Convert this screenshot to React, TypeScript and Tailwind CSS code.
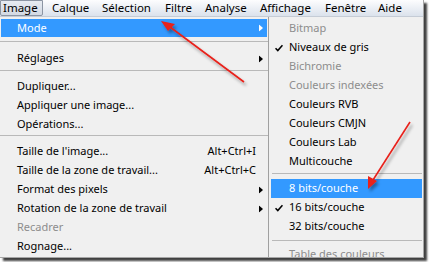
import React from "react";

type RowProps = {
  label: string;
  h: string;
  disabled?: boolean;
  hl?: boolean;
  arrow?: boolean;
  shortcut?: string;
  check?: boolean;
  sub?: boolean;
};

function Check({ white }: { white?: boolean }) {
  return (
    <svg width="8" height="8" viewBox="0 0 8 8" className="absolute left-[4px] top-1/2 -translate-y-1/2">
      <path d="M0.5 4.2 L2.8 6.5 L7.5 1.2" fill="none" stroke={white ? "#fff" : "#000"} strokeWidth="1.6" />
    </svg>
  );
}

function Row({ label, h, disabled, hl, arrow, shortcut, check, sub }: RowProps) {
  const base = sub
    ? "relative flex items-center ml-[2px] mr-[1px] pl-[18px]"
    : "relative flex items-center mx-[1px] pl-[16px]";
  const color = hl ? "bg-[#3399ff] text-white" : disabled ? "text-[#8d8d8d]" : "text-[#000000]";
  return (
    <div className={`${base} ${h} ${color}`}>
      {check && <Check white={hl} />}
      <span className="whitespace-nowrap">{label}</span>
      {shortcut && (
        <span className="absolute right-[11px] top-0 h-full flex items-center whitespace-nowrap">{shortcut}</span>
      )}
      {arrow && (
        <svg width="4" height="7" viewBox="0 0 4 7" className="absolute right-[4px] top-1/2 -translate-y-1/2">
          <path d="M0 0 L4 3.5 L0 7 Z" fill={hl ? "#fff" : "#000"} />
        </svg>
      )}
    </div>
  );
}

function Sep({ h, pt, sub }: { h: string; pt: string; sub?: boolean }) {
  return (
    <div className={`${h} ${pt} ${sub ? "pl-[3px] pr-[1px]" : ""}`}>
      <div className="h-[1px] bg-[#b9b9b9]" />
    </div>
  );
}

export default function App() {
  return (
    <div className="relative w-[429px] h-[262px] bg-white overflow-hidden font-['Noto_Sans',sans-serif] text-[11px]">
      <div className="w-[424px] h-[258px] bg-[#f0f0f0] shadow-[3px_3px_2px_rgba(0,0,0,0.75)] border-r border-b border-[#a6a6a6] overflow-hidden flex flex-col">
        {/* menu bar */}
        <div className="relative flex h-[17px] shrink-0 bg-gradient-to-b from-[#fdfdfe] to-[#dbe2ec] border-b border-[#c5ccd6] text-[11.5px] text-black leading-[16px]">
          <div className="absolute left-0 top-0 w-[43px] h-[16px] rounded-b-[2px] border border-[#8c95a3] bg-gradient-to-b from-[#e7ebf1] to-[#d3d9e3]" />
          <div className="relative w-[49px] pl-[3px]">Image</div>
          <div className="relative w-[50px] pl-[3px]">Calque</div>
          <div className="relative w-[63px] pl-[3px]">Sélection</div>
          <div className="relative w-[40px] pl-[3px]">Filtre</div>
          <div className="relative w-[55px] pl-[3px]">Analyse</div>
          <div className="relative w-[65px] pl-[3px]">Affichage</div>
          <div className="relative w-[53px] pl-[3px]">Fenêtre</div>
          <div className="relative pl-[3px]">Aide</div>
        </div>

        {/* body */}
        <div className="flex flex-1 min-h-0">
          <div className="w-[268px] pt-[2px] shrink-0">
            <Row label="Mode" h="h-[18px]" hl arrow />
            <Sep h="h-[12px]" pt="pt-[4px]" />
            <Row label="Réglages" h="h-[19px]" arrow />
            <Sep h="h-[9px]" pt="pt-[2px]" />
            <Row label="Dupliquer..." h="h-[19px]" />
            <Row label="Appliquer une image..." h="h-[19px]" />
            <Row label="Opérations..." h="h-[19px]" />
            <Sep h="h-[8px]" pt="pt-[1px]" />
            <Row label="Taille de l'image..." h="h-[19px]" shortcut="Alt+Ctrl+I" />
            <Row label="Taille de la zone de travail..." h="h-[19px]" shortcut="Alt+Ctrl+C" />
            <Row label="Format des pixels" h="h-[19px]" arrow />
            <Row label="Rotation de la zone de travail" h="h-[19px]" arrow />
            <Row label="Recadrer" h="h-[19px]" disabled />
            <Row label="Rognage..." h="h-[19px]" />
          </div>
          <div className="w-[1px] bg-[#a0a0a0] shrink-0" />
          <div className="flex-1 pt-[2px]">
            <Row sub label="Bitmap" h="h-[19px]" disabled />
            <Row sub label="Niveaux de gris" h="h-[19px]" check />
            <Row sub label="Bichromie" h="h-[19px]" disabled />
            <Row sub label="Couleurs indexées" h="h-[19px]" disabled />
            <Row sub label="Couleurs RVB" h="h-[19px]" />
            <Row sub label="Couleurs CMJN" h="h-[19px]" />
            <Row sub label="Couleurs Lab" h="h-[19px]" />
            <Row sub label="Multicouche" h="h-[19px]" />
            <Sep sub h="h-[8px]" pt="pt-[2px]" />
            <Row sub label="8 bits/couche" h="h-[19px]" hl />
            <Row sub label="16 bits/couche" h="h-[19px]" check />
            <Row sub label="32 bits/couche" h="h-[19px]" />
            <Sep sub h="h-[9px]" pt="pt-[4px]" />
            <Row sub label="Table des couleurs" h="h-[19px]" disabled />
          </div>
        </div>
      </div>

      {/* red annotation arrows */}
      <svg className="absolute left-0 top-0 pointer-events-none" width="429" height="262" viewBox="0 0 429 262">
        <defs>
          <filter id="sh" x="-20%" y="-20%" width="140%" height="140%">
            <feDropShadow dx="2" dy="3" stdDeviation="1.5" floodColor="#000" floodOpacity="0.35" />
          </filter>
        </defs>
        <g filter="url(#sh)">
          <line x1="244" y1="82" x2="170" y2="27" stroke="#e8201a" strokeWidth="1.6" />
          <path d="M161 21 L175 24 L168 31 Z" fill="#e8201a" />
          <line x1="410" y1="122" x2="373" y2="180" stroke="#e8201a" strokeWidth="1.6" />
          <path d="M368 189 L368 176 L377 181 Z" fill="#e8201a" />
        </g>
      </svg>
    </div>
  );
}
